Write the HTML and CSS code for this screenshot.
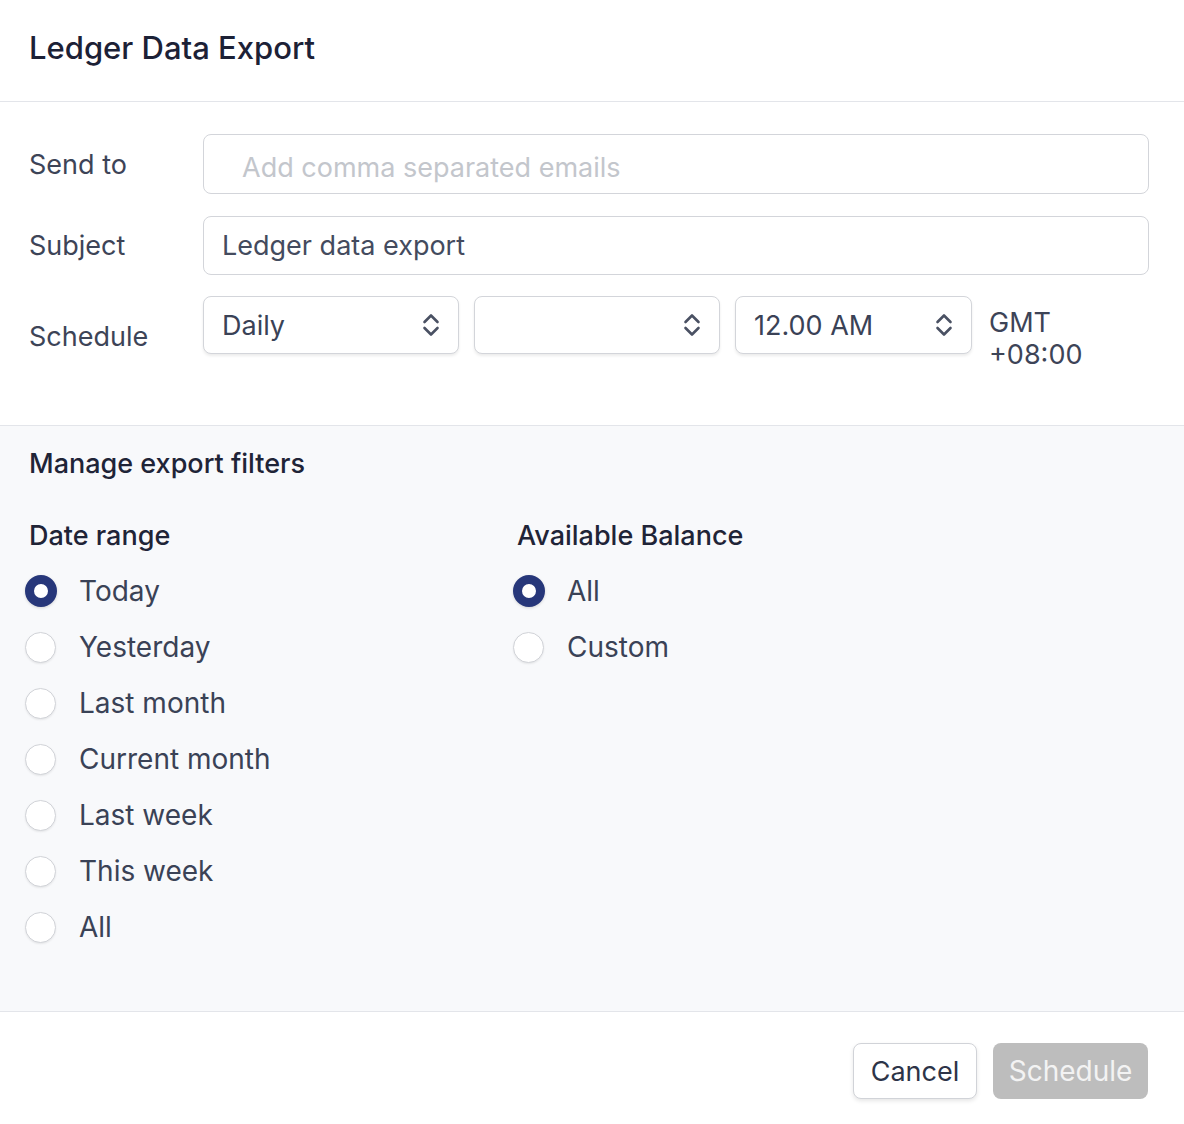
FILE: index.html
```html
<!DOCTYPE html>
<html lang="en">
<head>
    <meta charset="UTF-8">
    <meta name="viewport" content="width=device-width, initial-scale=1.0">
    <title>Ledger Data Export</title>
    <link rel="stylesheet" href="styles.css">
</head>
<body>
    <div class="modal">
        <div class="modal-header">
            <h1>Ledger Data Export</h1>
        </div>

        <div class="form-section">
            <div class="form-row">
                <label class="form-label" for="sendTo">Send to</label>
                <input type="text" id="sendTo" class="text-input emails" placeholder="Add comma separated emails">
            </div>
            <div class="form-row">
                <label class="form-label" for="subject">Subject</label>
                <input type="text" id="subject" class="text-input" value="Ledger data export">
            </div>
            <div class="form-row schedule-row">
                <span class="form-label">Schedule</span>
                <div class="schedule-fields">
                    <div class="select select-freq">
                        <span>Daily</span>
                        <svg class="chevrons" width="18" height="26" viewBox="0 0 18 26"><path d="M2.5 10l6.5-6.5 6.5 6.5M2.5 16l6.5 6.5 6.5-6.5" fill="none" stroke="#4a5163" stroke-width="2.6" stroke-linecap="round" stroke-linejoin="round"/></svg>
                    </div>
                    <div class="select select-day">
                        <span></span>
                        <svg class="chevrons" width="18" height="26" viewBox="0 0 18 26"><path d="M2.5 10l6.5-6.5 6.5 6.5M2.5 16l6.5 6.5 6.5-6.5" fill="none" stroke="#4a5163" stroke-width="2.6" stroke-linecap="round" stroke-linejoin="round"/></svg>
                    </div>
                    <div class="select select-time">
                        <span>12.00 AM</span>
                        <svg class="chevrons" width="18" height="26" viewBox="0 0 18 26"><path d="M2.5 10l6.5-6.5 6.5 6.5M2.5 16l6.5 6.5 6.5-6.5" fill="none" stroke="#4a5163" stroke-width="2.6" stroke-linecap="round" stroke-linejoin="round"/></svg>
                    </div>
                    <div class="timezone">GMT<br>+08:00</div>
                </div>
            </div>
        </div>

        <div class="filters-section">
            <h2>Manage export filters</h2>
            <div class="filter-columns">
                <div class="filter-group">
                    <h3>Date range</h3>
                    <label class="radio"><span class="radio-dot checked"></span>Today</label>
                    <label class="radio"><span class="radio-dot"></span>Yesterday</label>
                    <label class="radio"><span class="radio-dot"></span>Last month</label>
                    <label class="radio"><span class="radio-dot"></span>Current month</label>
                    <label class="radio"><span class="radio-dot"></span>Last week</label>
                    <label class="radio"><span class="radio-dot"></span>This week</label>
                    <label class="radio"><span class="radio-dot"></span>All</label>
                </div>
                <div class="filter-group">
                    <h3>Available Balance</h3>
                    <label class="radio"><span class="radio-dot checked"></span>All</label>
                    <label class="radio"><span class="radio-dot"></span>Custom</label>
                </div>
            </div>
        </div>

        <div class="modal-footer">
            <button class="btn btn-cancel">Cancel</button>
            <button class="btn btn-primary" disabled>Schedule</button>
        </div>
    </div>
</body>
</html>
```

FILE: styles.css
```css
body {
    margin: 0;
    padding: 0;
    font-family: Inter, "Noto Sans", sans-serif;
    background: #fff;
    color: #3a4256;
}
.modal {
    width: 1184px;
}
.modal-header {
    height: 102px;
    padding: 0 29px;
    box-sizing: border-box;
    border-bottom: 1px solid #e3e5ea;
}
.modal-header h1 {
    margin: 0;
    padding-top: 28px;
    font-size: 31px;
    line-height: 40px;
    font-weight: 500;
    color: #1c2136;
}
.form-section {
    padding: 32px 35px 54px 29px;
    border-bottom: 1px solid #e3e5ea;
}
.form-row {
    display: flex;
    align-items: center;
    margin-bottom: 22px;
}
.form-row:last-child {
    margin-bottom: 0;
}
.form-label {
    width: 174px;
    flex-shrink: 0;
    font-size: 27px;
    color: #3d4457;
}
.text-input {
    flex: 1;
    height: 59px;
    box-sizing: border-box;
    padding: 0 18px;
    border: 1.5px solid #d3d5da;
    border-radius: 8px;
    font-family: inherit;
    font-size: 27px;
    color: #444b5e;
    outline: none;
}
.text-input.emails {
    height: 60px;
    padding-left: 38px;
    padding-top: 6px;
}
.text-input::placeholder {
    color: #c3c6cc;
}
.schedule-row {
    align-items: center;
}
.schedule-row .form-label {
    padding-top: 4px;
}
.schedule-fields {
    display: flex;
    align-items: flex-start;
    gap: 15px;
    margin-top: -1px;
}
.select {
    height: 58px;
    box-sizing: border-box;
    display: flex;
    align-items: center;
    justify-content: space-between;
    padding: 0 18px 0 18px;
    border: 1.5px solid #d3d5da;
    border-radius: 8px;
    box-shadow: 0 2px 3px rgba(0, 0, 0, 0.08);
    font-size: 27px;
    color: #3a4256;
    background: #fff;
}
.select-freq {
    width: 256px;
}
.select-day {
    width: 246px;
}
.select-time {
    width: 237px;
}
.timezone {
    margin-left: 2px;
    padding-top: 11px;
    font-size: 27px;
    line-height: 32px;
    color: #3d4457;
}
.filters-section {
    background: #f8f9fb;
    padding: 22px 29px 56px;
    border-bottom: 1px solid #e3e5ea;
}
.filters-section h2 {
    margin: 0;
    font-size: 27px;
    line-height: 32px;
    font-weight: 500;
    color: #1f2437;
}
.filter-columns {
    display: grid;
    grid-template-columns: 488px 1fr;
    margin-top: 40px;
}
.filter-group h3 {
    margin: 0 0 11px;
    font-size: 27px;
    line-height: 32px;
    font-weight: 500;
    color: #1f2437;
}
.radio {
    display: flex;
    align-items: center;
    height: 56px;
    font-size: 28px;
    color: #3a4256;
}
.radio-dot {
    width: 31px;
    height: 31px;
    box-sizing: border-box;
    margin-left: -4px;
    margin-right: 23px;
    border-radius: 50%;
    border: 1.5px solid #d1d3d8;
    background: #fff;
    box-shadow: 0 1px 2px rgba(0, 0, 0, 0.08);
}
.radio-dot.checked {
    width: 32px;
    height: 32px;
    margin-right: 22px;
    border: 9.5px solid #27377a;
    box-shadow: 0 1px 3px rgba(0, 0, 0, 0.15);
}
.modal-footer {
    display: flex;
    justify-content: flex-end;
    gap: 16px;
    padding: 31px 36px 25px;
}
.btn {
    height: 56px;
    padding: 0 10px;
    border-radius: 8px;
    font-family: inherit;
    font-size: 28px;
    cursor: pointer;
}
.btn-cancel {
    width: 124px;
    font-size: 27px;
    background: #fff;
    color: #2d3448;
    border: 1.5px solid #d1d3d8;
    box-shadow: 0 2px 4px rgba(0, 0, 0, 0.1);
}
.btn-primary {
    width: 155px;
    background: #bdbdbd;
    color: #f3f3f3;
    border: none;
    cursor: default;
}
```
